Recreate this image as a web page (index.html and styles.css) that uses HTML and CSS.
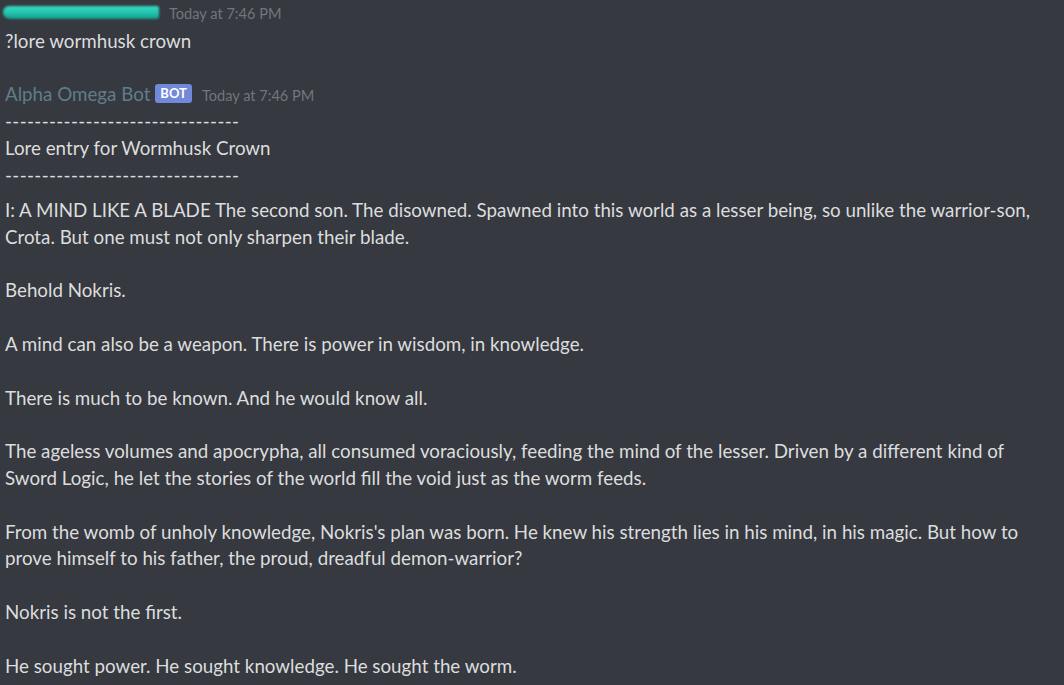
FILE: index.html
```html
<!DOCTYPE html>
<html>
<head>
<meta charset="utf-8">
<link rel="stylesheet" href="styles.css">
</head>
<body>
<div class="chat">
  <div class="message">
    <div class="header">
      <span class="redacted"></span>
      <span class="timestamp">Today at 7:46 PM</span>
    </div>
    <div class="content">?lore wormhusk crown</div>
  </div>
  <div class="message bot-message">
    <div class="header">
      <span class="username">Alpha Omega Bot</span>
      <span class="bot-tag">BOT</span>
      <span class="timestamp">Today at 7:46 PM</span>
    </div>
    <div class="content"><span class="dashes">--------------------------------</span>
Lore entry for Wormhusk Crown
<span class="dashes">--------------------------------</span></div>
    <div class="content lore">I: A MIND LIKE A BLADE The second son. The disowned. Spawned into this world as a lesser being, so unlike the warrior&#8209;son, Crota. But one must not only sharpen their blade.

Behold Nokris.

A mind can also be a weapon. There is power in wisdom, in knowledge.

There is much to be known. And he would know all.

The ageless volumes and apocrypha, all consumed voraciously, feeding the mind of the lesser. Driven by a different kind of Sword Logic, he let the stories of the world fill the void just as the worm feeds.

From the womb of unholy knowledge, Nokris's plan was born. He knew his strength lies in his mind, in his magic. But how to prove himself to his father, the proud, dreadful demon-warrior?

Nokris is not the first.

He sought power. He sought knowledge. He sought the worm.</div>
  </div>
</div>
</body>
</html>
```

FILE: styles.css
```css
html, body {
  margin: 0;
  padding: 0;
  background: #36393f;
  height: 100%;
  overflow: hidden;
}

.chat {
  padding: 0 10px 0 5px;
  font-family: Lato, "Noto Sans", sans-serif;
  color: #dcddde;
}

.message {
  display: flex;
  flex-direction: column;
}

.header {
  display: flex;
  align-items: center;
  height: 27px;
}

.redacted {
  display: inline-block;
  width: 156px;
  height: 13px;
  margin-top: -2px;
  margin-left: -2px;
  border-radius: 6px 2px 2px 7px;
  background: linear-gradient(180deg, #38d8c2 0%, #22c4ae 55%, #169684 100%);
  filter: blur(1.2px);
}

.timestamp {
  font-size: 14.6px;
  color: #72767d;
  margin-left: 10px;
}

.content {
  font-size: 18.75px;
  line-height: 27px;
  white-space: pre-wrap;
}

.dashes {
  letter-spacing: 0.36px;
}

.bot-message {
  margin-top: 26px;
}

.username {
  font-size: 18.75px;
  color: #607d8b;
}

.bot-tag {
  display: inline-block;
  margin-left: 5px;
  background: #7289da;
  color: #ffffff;
  font-size: 13px;
  font-weight: 700;
  line-height: 19px;
  padding: 0 5px;
  border-radius: 3px;
}

.bot-message .timestamp {
  margin-left: 10px;
  margin-top: 4px;
}

.lore {
  margin-top: 9px;
  line-height: 26.8px;
}
```
